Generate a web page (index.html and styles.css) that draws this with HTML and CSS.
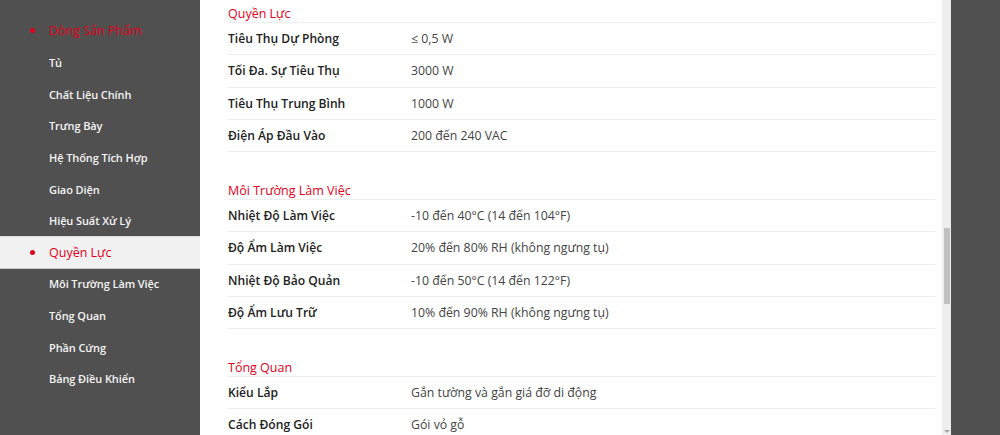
FILE: index.html
```html
<!DOCTYPE html>
<html lang="vi">
<head>
    <meta charset="UTF-8">
    <meta name="viewport" content="width=device-width, initial-scale=1.0">
    <title>Thông Số Kỹ Thuật</title>
    <link rel="stylesheet" href="styles.css">
</head>
<body>
    <div class="page">
        <div class="sidebar">
            <ul>
                <li class="parent">Dòng Sản Phẩm</li>
                <li>Tủ</li>
                <li>Chất Liệu Chính</li>
                <li>Trưng Bày</li>
                <li>Hệ Thống Tích Hợp</li>
                <li>Giao Diện</li>
                <li>Hiệu Suất Xử Lý</li>
                <li class="active">Quyền Lực</li>
                <li>Môi Trường Làm Việc</li>
                <li>Tổng Quan</li>
                <li>Phần Cứng</li>
                <li>Bảng Điều Khiển</li>
            </ul>
        </div>

        <main class="specs">
            <section class="spec-group">
                <h3>Quyền Lực</h3>
                <div class="spec-row"><span class="label">Tiêu Thụ Dự Phòng</span><span class="value">≤ 0,5 W</span></div>
                <div class="spec-row"><span class="label">Tối Đa. Sự Tiêu Thụ</span><span class="value">3000 W</span></div>
                <div class="spec-row"><span class="label">Tiêu Thụ Trung Bình</span><span class="value">1000 W</span></div>
                <div class="spec-row"><span class="label">Điện Áp Đầu Vào</span><span class="value">200 đến 240 VAC</span></div>
            </section>

            <section class="spec-group">
                <h3>Môi Trường Làm Việc</h3>
                <div class="spec-row"><span class="label">Nhiệt Độ Làm Việc</span><span class="value">-10 đến 40°C (14 đến 104°F)</span></div>
                <div class="spec-row"><span class="label">Độ Ẩm Làm Việc</span><span class="value">20% đến 80% RH (không ngưng tụ)</span></div>
                <div class="spec-row"><span class="label">Nhiệt Độ Bảo Quản</span><span class="value">-10 đến 50°C (14 đến 122°F)</span></div>
                <div class="spec-row"><span class="label">Độ Ẩm Lưu Trữ</span><span class="value">10% đến 90% RH (không ngưng tụ)</span></div>
            </section>

            <section class="spec-group">
                <h3>Tổng Quan</h3>
                <div class="spec-row"><span class="label">Kiểu Lắp</span><span class="value">Gắn tường và gắn giá đỡ di động</span></div>
                <div class="spec-row"><span class="label">Cách Đóng Gói</span><span class="value">Gói vỏ gỗ</span></div>
            </section>
        </main>

        <div class="scrollbar">
            <div class="thumb"></div>
            <div class="arrow"></div>
        </div>
    </div>
</body>
</html>
```

FILE: styles.css
```css
body {
    font-family: "Open Sans", Arial, sans-serif;
    margin: 0;
    padding: 0;
    background-color: #505050;
    overflow: hidden;
}

.page {
    display: flex;
    height: 435px;
}

.sidebar {
    width: 200px;
    flex-shrink: 0;
}

.sidebar ul {
    list-style: none;
    margin: 0;
    padding: 13px 0 0;
}

.sidebar li {
    display: flex;
    align-items: center;
    height: 31.6px;
    padding-left: 49px;
    color: #f4f4f4;
    font-size: 11px;
    font-weight: 600;
    letter-spacing: -0.1px;
}

.sidebar li.parent {
    height: 34px;
    color: #e2001a;
    font-size: 12.5px;
    font-weight: 400;
    letter-spacing: 0;
}

.sidebar li.active {
    height: 33.6px;
    margin: -1px 0;
    background-color: #f1f1f1;
    border-top: 1px solid #dcdcdc;
    border-bottom: 1px solid #c8c8c8;
    box-sizing: border-box;
    color: #e2001a;
    font-size: 12.5px;
    font-weight: 400;
    letter-spacing: 0;
}

.sidebar li.parent::before,
.sidebar li.active::before {
    content: "";
    width: 5px;
    height: 5px;
    border-radius: 50%;
    background-color: #e2001a;
    margin-left: -19px;
    margin-right: 14px;
}

.specs {
    width: 742px;
    flex-shrink: 0;
    background-color: #fff;
    padding: 4px 7px 0 28px;
    box-sizing: border-box;
}

.spec-group + .spec-group {
    margin-top: 29px;
}

.spec-group h3 {
    margin: 0;
    padding-top: 2px;
    color: #e2001a;
    font-size: 12.5px;
    font-weight: 400;
    line-height: 16px;
    border-bottom: 1px solid #eee;
}

.spec-row {
    display: flex;
    align-items: center;
    height: 32.25px;
    border-bottom: 1px solid #eee;
    box-sizing: border-box;
}

.label {
    width: 183px;
    color: #222;
    font-size: 12.1px;
    font-weight: 600;
}

.value {
    color: #444;
    font-size: 12.3px;
}

.scrollbar {
    width: 9px;
    flex-shrink: 0;
    background-color: #eee;
    display: flex;
    flex-direction: column;
    align-items: center;
}

.thumb {
    width: 6px;
    height: 76px;
    margin-top: 228px;
    background-color: #c1c1c1;
}

.arrow {
    margin-top: auto;
    margin-bottom: 2px;
    width: 0;
    height: 0;
    border-left: 3px solid transparent;
    border-right: 3px solid transparent;
    border-top: 3px solid #a3a3a3;
}
```
